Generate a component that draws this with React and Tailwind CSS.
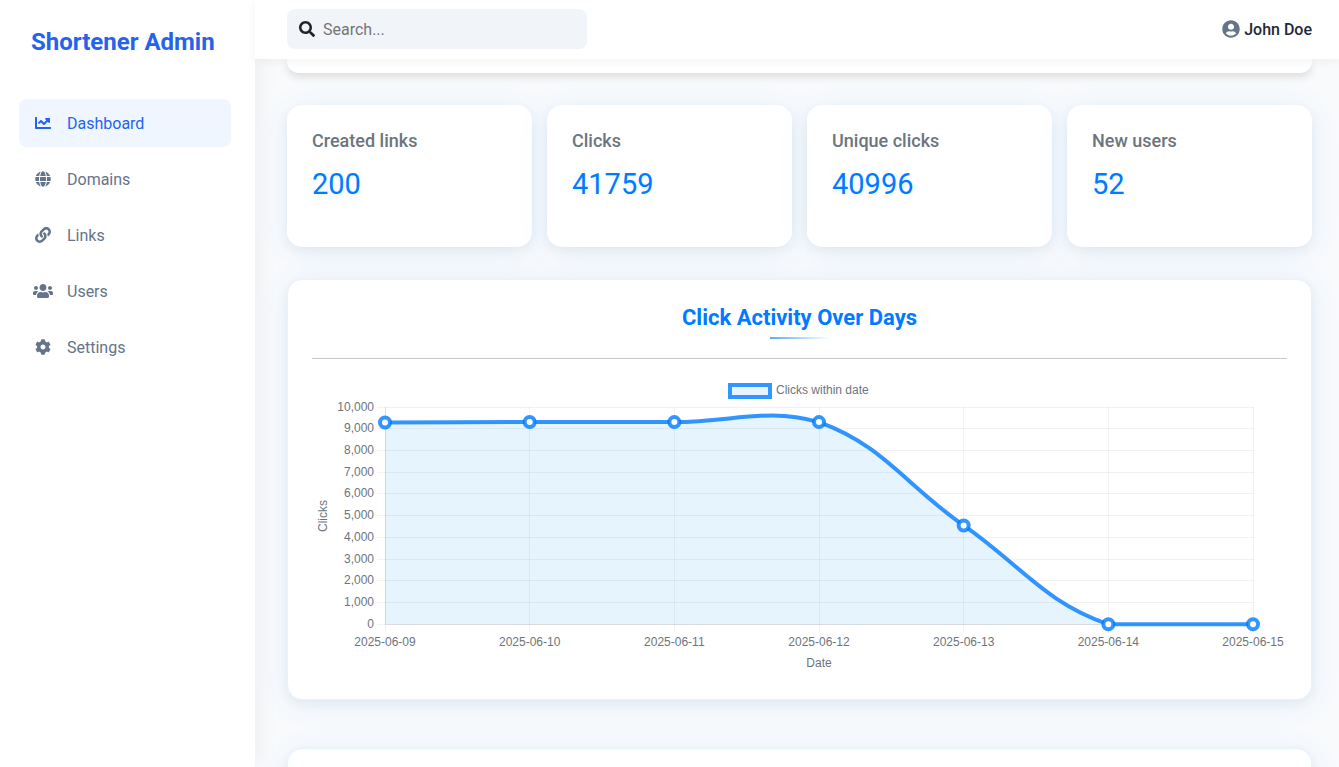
import React from "react";
import { FaChartLine, FaGlobe, FaLink, FaUsers, FaCog, FaSearch, FaUserCircle } from "react-icons/fa";

const navItems = [
  { label: "Dashboard", Icon: FaChartLine, active: true },
  { label: "Domains", Icon: FaGlobe },
  { label: "Links", Icon: FaLink },
  { label: "Users", Icon: FaUsers, wide: true },
  { label: "Settings", Icon: FaCog },
];

const stats = [
  { label: "Created links", value: 200 },
  { label: "Clicks", value: 41759 },
  { label: "Unique clicks", value: 40996 },
  { label: "New users", value: 52 },
];

const series = [
  { date: "2025-06-09", clicks: 9290 },
  { date: "2025-06-10", clicks: 9310 },
  { date: "2025-06-11", clicks: 9305 },
  { date: "2025-06-12", clicks: 9305 },
  { date: "2025-06-13", clicks: 4549 },
  { date: "2025-06-14", clicks: 0 },
  { date: "2025-06-15", clicks: 0 },
];

const area = { left: 73, right: 941, top: 32, bottom: 249.3 };
const yMax = 10000;

const clampY = (y) => Math.min(area.bottom, Math.max(area.top, y));

// Cubic spline whose control points follow the neighbouring distances.
function splinePath(pts, tension) {
  const handles = pts.map((cur, i) => {
    const prev = pts[i - 1] || cur;
    const next = pts[i + 1] || cur;
    const d01 = Math.hypot(cur.x - prev.x, cur.y - prev.y);
    const d12 = Math.hypot(next.x - cur.x, next.y - cur.y);
    const fa = (tension * d01) / (d01 + d12);
    const fb = (tension * d12) / (d01 + d12);
    const dx = next.x - prev.x;
    const dy = next.y - prev.y;
    return {
      inX: cur.x - fa * dx,
      inY: clampY(cur.y - fa * dy),
      outX: cur.x + fb * dx,
      outY: clampY(cur.y + fb * dy),
    };
  });
  return pts.slice(1).reduce(
    (d, p, i) =>
      `${d} C${handles[i].outX} ${handles[i].outY} ${handles[i + 1].inX} ${handles[i + 1].inY} ${p.x} ${p.y}`,
    `M${pts[0].x} ${pts[0].y}`
  );
}

function ClickChart() {
  const step = (area.right - area.left) / (series.length - 1);
  const height = area.bottom - area.top;
  const pts = series.map((s, i) => ({
    x: area.left + i * step,
    y: area.bottom - (s.clicks / yMax) * height,
  }));
  const line = splinePath(pts, 0.4);
  const ticks = Array.from({ length: 11 }, (_, i) => i * 1000);

  return (
    <svg
      viewBox="0 0 975 300"
      className="block w-full fill-[#6c757d] font-['Liberation_Sans',Arial,sans-serif] text-[12px]"
      role="img"
      aria-label="Clicks within date"
    >
      <rect x="418" y="10" width="40" height="12" fill="#e7f4fe" stroke="#3395ff" strokeWidth="4" />
      <text x="464" y="19">Clicks within date</text>

      {ticks.map((t) => {
        const y = Math.floor(area.bottom - (t / yMax) * height) + 0.5;
        return (
          <g key={t}>
            <path d={`M${area.left - 8} ${y}H${area.right + 1}`} stroke="#000" strokeOpacity="0.05" />
            <text x="62" y={y + 3} textAnchor="end">{t.toLocaleString("en-US")}</text>
          </g>
        );
      })}
      {pts.map((p, i) => (
        <g key={series[i].date}>
          <path d={`M${Math.floor(p.x) + 0.5} ${area.top}V${area.bottom + 8}`} stroke="#000" strokeOpacity="0.05" />
          <text x={p.x} y="271" textAnchor="middle">{series[i].date}</text>
        </g>
      ))}
      <path d={`M${area.left + 0.5} ${area.top}V249.5H${area.right}`} fill="none" stroke="#000" strokeOpacity="0.07" />

      <path d={`${line} L${area.right} ${area.bottom} L${area.left} ${area.bottom}Z`} fill="#0d91f5" fillOpacity="0.1" />
      <path d={line} fill="none" stroke="#007bff" strokeOpacity="0.8" strokeWidth="4" />
      {pts.map((p, i) => (
        <g key={series[i].date}>
          <circle cx={p.x} cy={p.y} r="5" fill="#fff" />
          <circle cx={p.x} cy={p.y} r="5" fill="none" stroke="#007bff" strokeOpacity="0.8" strokeWidth="4" />
        </g>
      ))}

      <text x="507" y="292" textAnchor="middle">Date</text>
      <text transform="translate(15 141) rotate(-90)" textAnchor="middle">Clicks</text>
    </svg>
  );
}

function Sidebar() {
  return (
    <aside className="z-10 flex w-[255px] shrink-0 flex-col bg-white px-[19px] pt-6 shadow-[4px_0_20px_rgba(0,0,0,0.05)]">
      <div className="px-3 text-2xl leading-9 font-bold text-[#2563eb]">Shortener Admin</div>
      <nav className="mt-[39px] flex w-[212px] flex-col gap-2">
        {navItems.map(({ label, Icon, active, wide }) => (
          <a
            key={label}
            href="#"
            aria-current={active ? "page" : undefined}
            className={`flex h-12 items-center gap-3 rounded-lg px-3 text-base leading-[25px] ${
              active ? "bg-[#eff6ff] text-[#2563eb]" : "text-[#64748b]"
            }`}
          >
            <span className="flex w-6 justify-center">
              <Icon className={wide ? "h-4 w-5" : "size-4"} />
            </span>
            {label}
          </a>
        ))}
      </nav>
    </aside>
  );
}

function Header() {
  return (
    <header className="z-20 flex h-[59px] shrink-0 items-center justify-between bg-white pr-[27px] pb-px pl-8 shadow-[0_2px_10px_rgba(0,0,0,0.05)]">
      <label className="flex h-10 w-[300px] items-center gap-2 rounded-lg bg-[#f1f5f9] px-3">
        <FaSearch className="size-4 text-[#212529]" />
        <input
          type="text"
          aria-label="Search"
          placeholder="Search..."
          className="min-w-0 flex-1 bg-transparent text-base leading-[25px] text-[#212529] outline-none placeholder:text-[#757575]"
        />
      </label>
      <button type="button" className="flex items-center gap-1 text-base leading-[25px] font-medium text-[#1e293b]">
        <FaUserCircle className="size-[18px] text-[#64748b]" />
        John Doe
      </button>
    </header>
  );
}

const panel =
  "rounded-[15px] border border-[#e6f2ff] bg-white shadow-[0_4px_12px_rgba(0,0,0,0.05),0_4px_32px_rgba(0,123,255,0.08)]";

export default function App() {
  return (
    <div className="flex h-screen overflow-hidden bg-white font-['Roboto',sans-serif]">
      <Sidebar />
      <div className="flex min-w-0 flex-1 flex-col">
        <Header />
        <main className="flex min-h-0 flex-1 flex-col overflow-hidden bg-[#f8fafc] pr-[27px] pl-8">
          <section className="h-[14px] shrink-0 rounded-b-xl bg-white shadow-[0_4px_8px_rgba(0,0,0,0.12)]" />

          <section className="mt-8 grid shrink-0 grid-cols-4 gap-[15px]">
            {stats.map((s) => (
              <div
                key={s.label}
                className="h-[142px] rounded-[15px] bg-white px-[25px] pt-6 shadow-[0_4px_12px_rgba(0,0,0,0.05),0_4px_32px_rgba(0,123,255,0.08)]"
              >
                <h3 className="text-lg leading-6 font-medium text-[#6c757d]">{s.label}</h3>
                <p className="mt-[13px] text-[29px] leading-9 text-[#007bff] [text-shadow:0_2px_4px_rgba(0,123,255,0.1)]">
                  {s.value}
                </p>
              </div>
            ))}
          </section>

          <section className={`mt-8 shrink-0 px-6 pt-5 pb-6 ${panel}`}>
            <h2 className="text-center text-[22px] leading-9 font-bold text-[#007bff]">Click Activity Over Days</h2>
            <div className="mx-auto mt-px h-0.5 w-[60px] bg-linear-to-r from-[#5aabff] to-transparent" />
            <hr className="mt-[19px] mb-4 border-[#c7c8c9]" />
            <ClickChart />
          </section>

          <section className={`mt-12 h-[420px] shrink-0 ${panel}`} />
        </main>
      </div>
    </div>
  );
}
